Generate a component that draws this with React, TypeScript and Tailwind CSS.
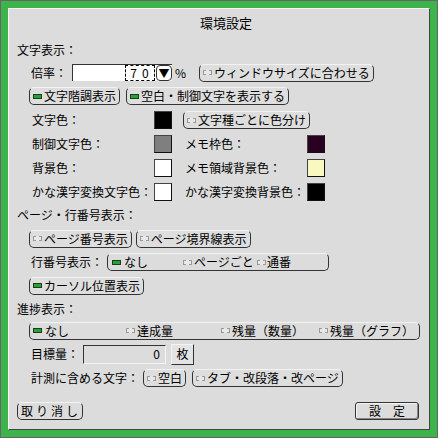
import React from "react";

const font = { fontFamily: '"Noto Sans CJK JP", "Noto Sans", sans-serif' };

// small state marker drawn at the left of toggle buttons
function Mark({ on }: { on?: boolean }) {
  return on ? (
    <span className="inline-block w-[9px] h-[5px] bg-[#22a532] border border-[#1f3a1f] shrink-0" />
  ) : (
    <span className="inline-block w-[9px] h-[5px] border border-dashed border-[#9a9a9a] bg-[#e8e8e8] shrink-0" />
  );
}

function Btn({ on, children, className = "" }: { on?: boolean; children: React.ReactNode; className?: string }) {
  return (
    <div
      className={`inline-flex items-center gap-[2px] h-[18px] pl-[3px] pr-[3px] rounded-[5px] border border-[#333] border-t-[#f2f2f2] bg-[#dedede] text-[12px] leading-none text-black ${className}`}
    >
      <Mark on={on} />
      <span>{children}</span>
    </div>
  );
}

function Swatch({ color }: { color: string }) {
  return (
    <div className="w-[18px] h-[18px] border border-[#444] border-b-[#111] border-r-[#111] shrink-0" style={{ backgroundColor: color }} />
  );
}

function ColorRow({ l1, c1, l2, c2 }: { l1: string; c1: string; l2?: string; c2?: string }) {
  return (
    <div className="flex items-center h-[24px] pl-[15px]">
      <span className="w-[122px]">{l1}</span>
      <Swatch color={c1} />
      {l2 && (
        <>
          <span className="w-[122px] ml-[13px]">{l2}</span>
          <Swatch color={c2!} />
        </>
      )}
    </div>
  );
}

export default function App() {
  return (
    <div className="w-[438px] h-[438px] bg-[#3cb44b] border border-[#666] p-[7px]" style={font}>
      <div className="w-full h-full bg-[#dcdcdc] border border-t-[#f4f4f4] border-l-[#f4f4f4] border-r-[#444] border-b-[#444] flex flex-col pl-[8px] text-[12px] leading-none text-black">
        {/* title */}
        <div className="h-[26px] flex items-center justify-center pl-[6px] text-[13px]">環境設定</div>

        {/* text display */}
        <div className="mt-[4px] h-[22px] flex items-center">文字表示：</div>
        <div className="h-[23px] flex items-center pl-[14px]">
          <span className="w-[41px]">倍率：</span>
          <div className="flex h-[17px] w-[100px] bg-white border-t border-l border-[#333]">
            <div className="flex-1" />
            <div className="w-[30px] border border-dashed border-black flex items-center justify-center tracking-[5px] pl-[4px]">70</div>
            <div className="w-[16px] ml-[1px] rounded-[4px] border border-[#333] flex items-center justify-center text-[11px]">▼</div>
          </div>
          <span className="ml-[3px]">%</span>
          <Btn className="ml-[13px]">ウィンドウサイズに合わせる</Btn>
        </div>
        <div className="h-[24px] flex items-center gap-[6px] pl-[12px]">
          <Btn on>文字階調表示</Btn>
          <Btn on>空白・制御文字を表示する</Btn>
        </div>
        <div className="flex items-center h-[24px] pl-[15px]">
          <span className="w-[122px]">文字色：</span>
          <Swatch color="#000000" />
          <Btn className="ml-[11px]">文字種ごとに色分け</Btn>
        </div>
        <ColorRow l1="制御文字色：" c1="#7f7f7f" l2="メモ枠色：" c2="#2a0022" />
        <ColorRow l1="背景色：" c1="#ffffff" l2="メモ領域背景色：" c2="#f8f8c0" />
        <div className="h-[23px]">
          <ColorRow l1="かな漢字変換文字色：" c1="#ffffff" l2="かな漢字変換背景色：" c2="#000000" />
        </div>

        {/* page / line numbers */}
        <div className="h-[24px] flex items-center">ページ・行番号表示：</div>
        <div className="h-[23px] flex items-center gap-[4px] pl-[12px]">
          <Btn>ページ番号表示</Btn>
          <Btn>ページ境界線表示</Btn>
        </div>
        <div className="h-[24px] flex items-center pl-[14px]">
          <span className="w-[76px]">行番号表示：</span>
          <div className="grid grid-cols-[75px_74px_1fr] w-[222px] h-[18px] rounded-[5px] border border-[#333] border-t-[#f2f2f2] items-center">
            <div className="flex items-center gap-[3px] pl-[4px]"><Mark on />なし</div>
            <div className="flex items-center gap-[2px]"><Mark />ページごと</div>
            <div className="flex items-center gap-[1px]"><Mark />通番</div>
          </div>
        </div>
        <div className="h-[23px] flex items-center pl-[12px]">
          <Btn on>カーソル位置表示</Btn>
        </div>

        {/* progress */}
        <div className="h-[24px] flex items-center">進捗表示：</div>
        <div className="h-[19px] flex items-center pl-[12px]">
          <div className="grid grid-cols-[96px_95px_98px_1fr] w-[391px] h-[18px] rounded-[5px] border border-[#333] border-t-[#f2f2f2] items-center">
            <div className="flex items-center gap-[3px] pl-[3px]"><Mark on />なし</div>
            <div className="flex items-center gap-[2px]"><Mark />達成量</div>
            <div className="flex items-center gap-[2px]"><Mark />残量（数量）</div>
            <div className="flex items-center gap-[2px]"><Mark />残量（グラフ）</div>
          </div>
        </div>
        <div className="h-[28px] flex items-center pl-[14px]">
          <span className="w-[52px]">目標量：</span>
          <div className="w-[83px] h-[19px] border border-t-[#333] border-l-[#333] border-b-[#f4f4f4] border-r-[#f4f4f4] flex items-center justify-end pr-[5px]">0</div>
          <div className="ml-[5px] w-[23px] h-[21px] bg-[#e4e4e4] border border-t-[#f4f4f4] border-l-[#f4f4f4] border-r-[#333] border-b-[#333] flex items-center justify-center">枚</div>
        </div>
        <div className="h-[20px] flex items-center pl-[14px]">
          <span className="w-[112px]">計測に含める文字：</span>
          <Btn>空白</Btn>
          <Btn className="ml-[6px]">タブ・改段落・改ページ</Btn>
        </div>

        {/* footer */}
        <div className="mt-[13px] h-[19px] flex items-center justify-between pr-[10px]">
          <div className="h-[18px] w-[66px] rounded-[5px] border border-[#333] border-t-[#f2f2f2] flex items-center justify-center tracking-[3px] pl-[2px]">取り消し</div>
          <div className="h-[18px] w-[64px] rounded-[3px] border border-[#333] shadow-[inset_1px_1px_0_#f4f4f4,inset_-1px_-1px_0_#888] flex items-center justify-center">設　定</div>
        </div>
      </div>
    </div>
  );
}
